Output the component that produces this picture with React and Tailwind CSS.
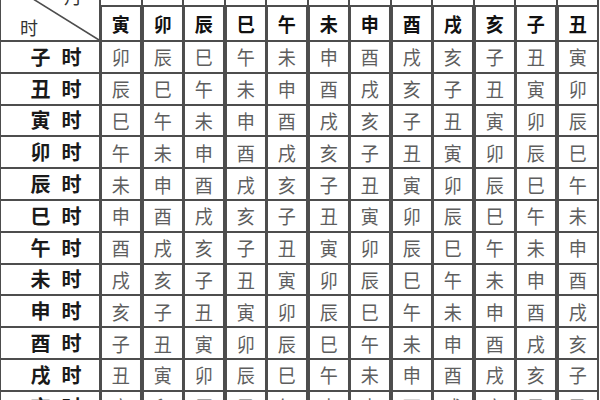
import React from "react";

const B = "子丑寅卯辰巳午未申酉戌亥".split("");

export default function App() {
  const header = Array.from({ length: 12 }, (_, j) => B[(2 + j) % 12]);
  return (
    <div className="w-[600px] h-[400px] overflow-hidden bg-white font-['Noto_Sans_CJK_SC','Noto_Sans_CJK_JP',sans-serif]">
      <div className="grid w-max -mt-[23px] -ml-px gap-[2px] bg-[#4d4d4d] border-2 border-[#4d4d4d] grid-cols-[98px_repeat(12,39.5px)] grid-rows-[26px_33px_repeat(12,29.8px)]">
        <div className="relative row-span-2 bg-white flex flex-col justify-between pt-[8px] pb-[4px] pl-[19px] pr-[17px] text-[18px] leading-none text-[#333]">
          <svg className="absolute inset-0 w-full h-full" preserveAspectRatio="none" viewBox="0 0 100 100">
            <line x1="0" y1="0" x2="100" y2="100" stroke="#4d4d4d" strokeWidth="1.6" vectorEffect="non-scaling-stroke" />
          </svg>
          <span className="self-end">月</span>
          <span className="self-start">时</span>
        </div>
        {header.map((h, j) => (
          <div key={"t" + j} className="bg-white" />
        ))}
        {header.map((h, j) => (
          <div key={"h" + j} className="bg-white flex items-center justify-center text-[19px] font-bold text-[#111] leading-none scale-x-95">
            {h}
          </div>
        ))}
        {B.map((r, i) => (
          <React.Fragment key={r}>
            <div className="bg-white flex items-center justify-center pl-[12px] gap-[11px] text-[20px] font-bold text-[#1a1a1a] leading-none">
              <span>{r}</span>
              <span>时</span>
            </div>
            {header.map((_, j) => (
              <div key={j} className="bg-white flex items-center justify-center text-[19px] text-[#5e5e5e] leading-none scale-x-95">
                {B[(3 + i + j) % 12]}
              </div>
            ))}
          </React.Fragment>
        ))}
      </div>
    </div>
  );
}
